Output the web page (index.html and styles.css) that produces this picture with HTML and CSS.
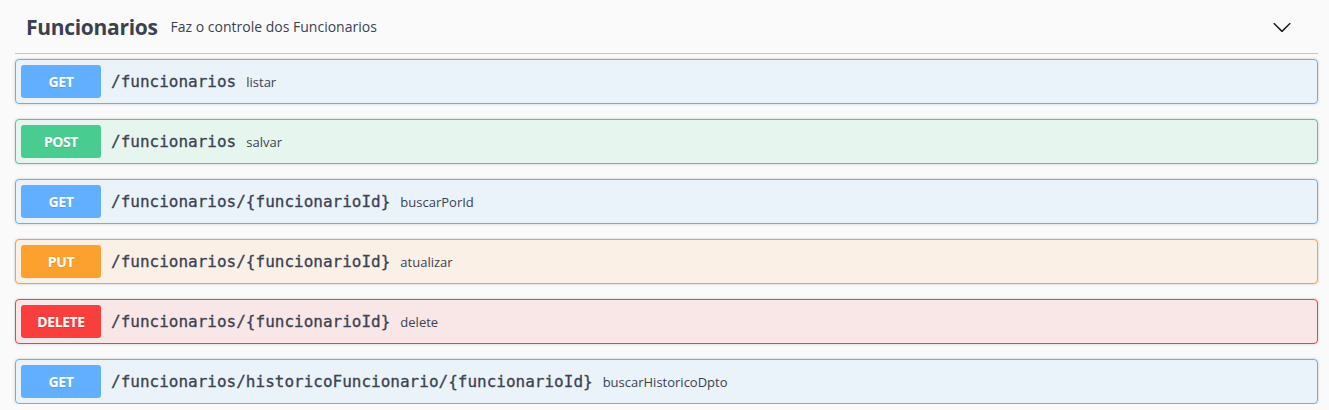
FILE: index.html
```html
<!DOCTYPE html>
<html>
<head>
<meta charset="utf-8">
<link rel="stylesheet" href="styles.css">
</head>
<body>
<div class="wrapper">
  <div class="tag">
    <h3 class="tag-title">Funcionarios</h3>
    <small class="tag-desc">Faz o controle dos Funcionarios</small>
    <button class="expand" aria-label="collapse">
      <svg width="20" height="20" viewBox="0 0 20 20"><path fill="#1a1a1a" d="M17.418 6.109c.272-.268.709-.268.979 0s.271.701 0 .969l-7.908 7.83c-.27.268-.707.268-.979 0l-7.908-7.83c-.27-.268-.27-.701 0-.969.271-.268.709-.268.979 0L10 13.25l7.418-7.141z"/></svg>
    </button>
  </div>
  <div class="ops">
    <div class="op op-get"><span class="method">GET</span><span class="path">/funcionarios</span><span class="desc">listar</span></div>
    <div class="op op-post"><span class="method">POST</span><span class="path">/funcionarios</span><span class="desc">salvar</span></div>
    <div class="op op-get"><span class="method">GET</span><span class="path">/funcionarios/{funcionarioId}</span><span class="desc">buscarPorId</span></div>
    <div class="op op-put"><span class="method">PUT</span><span class="path">/funcionarios/{funcionarioId}</span><span class="desc">atualizar</span></div>
    <div class="op op-delete"><span class="method">DELETE</span><span class="path">/funcionarios/{funcionarioId}</span><span class="desc">delete</span></div>
    <div class="op op-get"><span class="method">GET</span><span class="path">/funcionarios/historicoFuncionario/{funcionarioId}</span><span class="desc">buscarHistoricoDpto</span></div>
  </div>
</div>
</body>
</html>
```

FILE: styles.css
```css
html, body {
  margin: 0;
  padding: 0;
  background: #fafafa;
}
body {
  font-family: "Open Sans", "Noto Sans", sans-serif;
  color: #3b4151;
}
.wrapper {
  width: 1303px;
  padding-left: 15px;
}
.tag {
  height: 53px;
  display: flex;
  align-items: center;
  border-bottom: 1px solid #c4c6cb;
  margin-bottom: 5px;
  padding: 0 26px 0 11px;
}
.tag-title {
  margin: 0;
  font-family: "Open Sans", sans-serif;
  font-weight: 700;
  font-size: 21px;
  letter-spacing: -0.3px;
  color: #3b4151;
}
.tag-desc {
  flex: 1;
  padding: 0 12px 0 13px;
  font-size: 14px;
  color: #3b4151;
}
.expand {
  border: 0;
  background: none;
  padding: 0;
  width: 20px;
  height: 20px;
  display: flex;
}
.ops {
  display: flex;
  flex-direction: column;
  gap: 15px;
}
.op {
  display: flex;
  align-items: center;
  padding: 5px;
  border: 1px solid;
  border-radius: 4px;
  box-shadow: 0 0 3px rgba(0,0,0,.19);
}
.method {
  min-width: 80px;
  box-sizing: border-box;
  padding: 6px 10px;
  line-height: 21px;
  border-radius: 3px;
  text-align: center;
  color: #fff;
  font-family: "Open Sans", sans-serif;
  font-weight: 700;
  font-size: 14px;
  letter-spacing: -0.4px;
  text-shadow: 0 1px 0 rgba(0,0,0,.1);
}
.path {
  padding: 0 10px;
  font-family: "DejaVu Sans Mono", monospace;
  font-size: 16px;
  font-weight: 400;
  -webkit-text-stroke: 0.3px #3b4151;
  color: #3b4151;
}
.desc {
  font-size: 13px;
  color: #3b4151;
}
.op-get { border-color: #61affe; background: rgba(97,175,254,.1); }
.op-get .method { background: #61affe; }
.op-post { border-color: #49cc90; background: rgba(73,204,144,.1); }
.op-post .method { background: #49cc90; }
.op-put { border-color: #fca130; background: rgba(252,161,48,.1); }
.op-put .method { background: #fca130; }
.op-delete { border-color: #f93e3e; background: rgba(249,62,62,.1); }
.op-delete .method { background: #f93e3e; }
```
